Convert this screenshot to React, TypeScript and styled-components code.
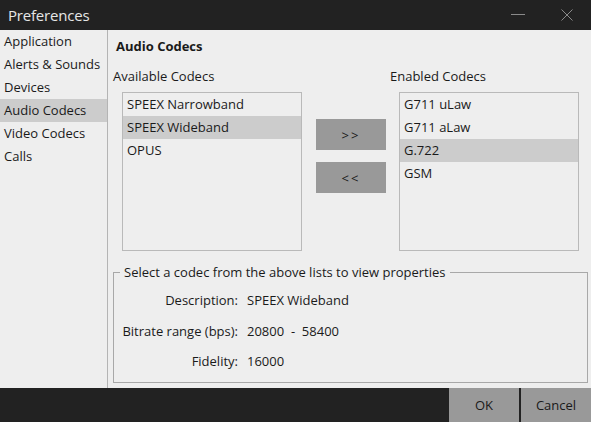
import React, { useState } from 'react';
import styled, { createGlobalStyle } from 'styled-components';

const GlobalStyle = createGlobalStyle`
  html, body {
    margin: 0;
    padding: 0;
    background: #222222;
  }
  body {
    font-family: 'Open Sans', 'Noto Sans', sans-serif;
    font-size: 13px;
    color: #1a1a1a;
  }
`;

const StyledWindow = styled.div`
  width: 591px;
  height: 422px;
  display: flex;
  flex-direction: column;
  background: #eeeeee;
  overflow: hidden;
`;
const StyledTitleBar = styled.div`
  height: 30px;
  flex: none;
  background: #222222;
  display: flex;
  align-items: center;
  padding-left: 8px;
`;
const StyledTitle = styled.div`
  flex: 1;
  color: #e6e6e6;
  font-size: 15px;
  letter-spacing: -0.2px;
`;
const StyledWinButton = styled.div`
  width: 49px;
  height: 30px;
  display: flex;
  align-items: center;
  justify-content: center;
`;
const StyledBody = styled.div`
  flex: 1;
  display: flex;
  min-height: 0;
`;
const StyledSidebar = styled.div`
  width: 107px;
  flex: none;
  border-right: 1px solid #b4b4b4;
  display: flex;
  flex-direction: column;
`;
const StyledNavItem = styled.div<{ $active?: boolean }>`
  height: 23px;
  line-height: 23px;
  padding-left: 4px;
  white-space: nowrap;
  background: ${(p) => (p.$active ? '#cccccc' : 'transparent')};
  cursor: pointer;
`;
const StyledMain = styled.div`
  flex: 1;
  padding: 7px 3px 0 5px;
  display: flex;
  flex-direction: column;
`;
const StyledHeading = styled.div`
  font-weight: 700;
  line-height: 18px;
  padding-left: 3px;
`;
const StyledCodecRow = styled.div`
  display: flex;
  margin-top: 12px;
`;
const StyledColumn = styled.div`
  width: 189px;
  display: flex;
  flex-direction: column;
`;
const StyledLabel = styled.div`
  line-height: 18px;
  margin-bottom: 7px;
`;
const StyledList = styled.div`
  margin-left: 9px;
  width: 180px;
  height: 159px;
  box-sizing: border-box;
  border: 1px solid #b9b9b9;
  background: #eeeeee;
`;
const StyledListItem = styled.div<{ $selected?: boolean }>`
  height: 23px;
  line-height: 23px;
  padding-left: 4px;
  white-space: nowrap;
  background: ${(p) => (p.$selected ? '#cccccc' : 'transparent')};
  cursor: pointer;
`;
const StyledMoveButtons = styled.div`
  width: 70px;
  margin: 0 4px 0 14px;
  padding-top: 52px;
  display: flex;
  flex-direction: column;
  gap: 12px;
`;
const StyledGrayButton = styled.button<{ $footer?: boolean }>`
  width: 70px;
  height: ${(p) => (p.$footer ? 34 : 31)}px;
  border: none;
  margin: 0;
  padding: 0;
  background: #999999;
  color: #1a1a1a;
  font-family: inherit;
  font-size: 13px;
  letter-spacing: ${(p) => (p.$footer ? 0 : 2)}px;
  cursor: pointer;
`;
const StyledFieldset = styled.fieldset`
  margin: 12px 0 0 0;
  padding: 4px 0 5px 0;
  border: 1px solid #a8a8a8;
  min-width: 0;
`;
const StyledLegend = styled.legend`
  margin-left: 6px;
  padding: 0 4px;
  line-height: 18px;
`;
const StyledProps = styled.div`
  display: grid;
  grid-template-columns: 124px 1fr;
  grid-auto-rows: 30.5px;
  column-gap: 9px;
  align-items: center;
`;
const StyledPropLabel = styled.div`
  text-align: right;
  white-space: nowrap;
`;
const StyledFooter = styled.div`
  height: 34px;
  flex: none;
  background: #222222;
  display: flex;
  justify-content: flex-end;
  gap: 2px;
`;

const NAV = ['Application', 'Alerts & Sounds', 'Devices', 'Audio Codecs', 'Video Codecs', 'Calls'];
const AVAILABLE = ['SPEEX Narrowband', 'SPEEX Wideband', 'OPUS'];
const ENABLED = ['G711 uLaw', 'G711 aLaw', 'G.722', 'GSM'];

const App: React.FC = () => {
  const [page, setPage] = useState('Audio Codecs');
  const [availSel, setAvailSel] = useState('SPEEX Wideband');
  const [enabledSel, setEnabledSel] = useState('G.722');

  return (
    <StyledWindow>
      <GlobalStyle />
      <StyledTitleBar>
        <StyledTitle>Preferences</StyledTitle>
        <StyledWinButton>
          <svg width="14" height="2" viewBox="0 0 14 2">
            <rect x="0" y="0" width="14" height="1" fill="#8a8a8a" />
          </svg>
        </StyledWinButton>
        <StyledWinButton>
          <svg width="12" height="12" viewBox="0 0 12 12">
            <path d="M0.5 0.5 L11.5 11.5 M11.5 0.5 L0.5 11.5" stroke="#8a8a8a" strokeWidth="1" />
          </svg>
        </StyledWinButton>
      </StyledTitleBar>
      <StyledBody>
        <StyledSidebar>
          {NAV.map((n) => (
            <StyledNavItem key={n} $active={n === page} onClick={() => setPage(n)}>
              {n}
            </StyledNavItem>
          ))}
        </StyledSidebar>
        <StyledMain>
          <StyledHeading>Audio Codecs</StyledHeading>
          <StyledCodecRow>
            <StyledColumn>
              <StyledLabel>Available Codecs</StyledLabel>
              <StyledList>
                {AVAILABLE.map((c) => (
                  <StyledListItem key={c} $selected={c === availSel} onClick={() => setAvailSel(c)}>
                    {c}
                  </StyledListItem>
                ))}
              </StyledList>
            </StyledColumn>
            <StyledMoveButtons>
              <StyledGrayButton>&gt;&gt;</StyledGrayButton>
              <StyledGrayButton>&lt;&lt;</StyledGrayButton>
            </StyledMoveButtons>
            <StyledColumn>
              <StyledLabel>Enabled Codecs</StyledLabel>
              <StyledList>
                {ENABLED.map((c) => (
                  <StyledListItem key={c} $selected={c === enabledSel} onClick={() => setEnabledSel(c)}>
                    {c}
                  </StyledListItem>
                ))}
              </StyledList>
            </StyledColumn>
          </StyledCodecRow>
          <StyledFieldset>
            <StyledLegend>Select a codec from the above lists to view properties</StyledLegend>
            <StyledProps>
              <StyledPropLabel>Description:</StyledPropLabel>
              <div>SPEEX Wideband</div>
              <StyledPropLabel>Bitrate range (bps):</StyledPropLabel>
              <div>20800&nbsp; -&nbsp; 58400</div>
              <StyledPropLabel>Fidelity:</StyledPropLabel>
              <div>16000</div>
            </StyledProps>
          </StyledFieldset>
        </StyledMain>
      </StyledBody>
      <StyledFooter>
        <StyledGrayButton $footer>OK</StyledGrayButton>
        <StyledGrayButton $footer>Cancel</StyledGrayButton>
      </StyledFooter>
    </StyledWindow>
  );
};

export default App;
